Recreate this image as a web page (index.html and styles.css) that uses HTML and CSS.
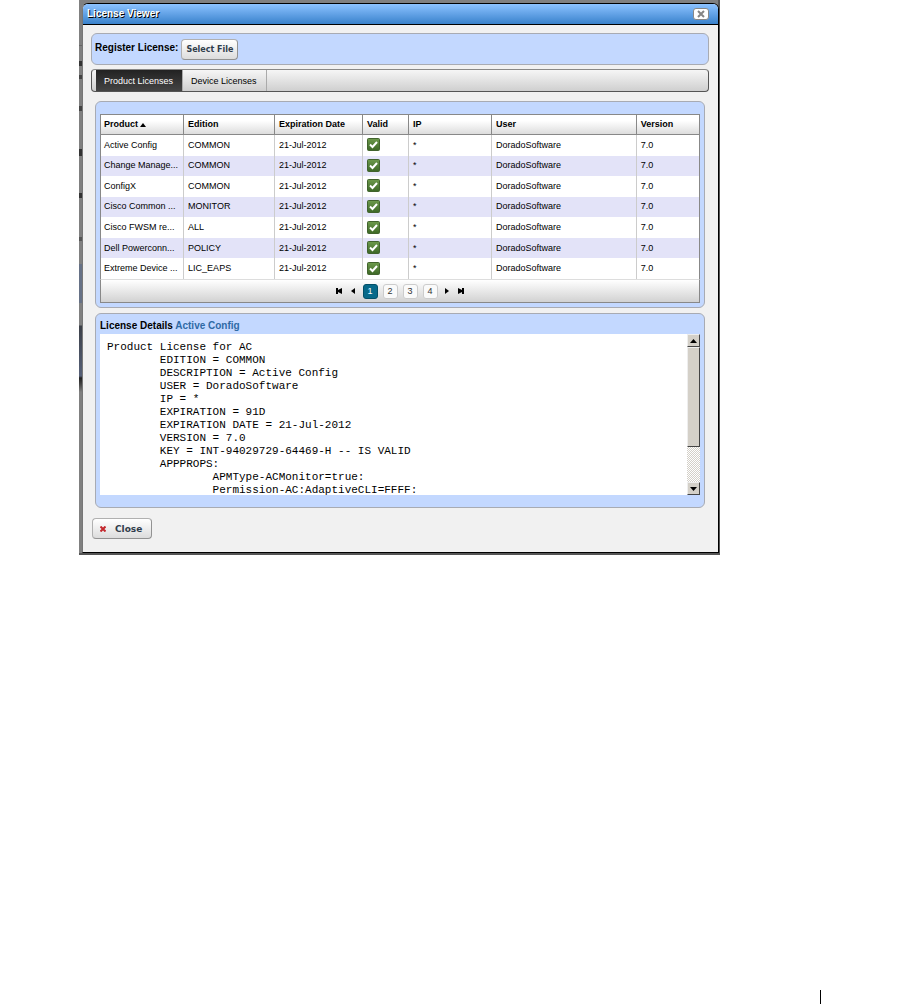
FILE: index.html
```html
<!DOCTYPE html>
<html lang="en">
<head>
    <meta charset="UTF-8">
    <meta name="viewport" content="width=device-width, initial-scale=1.0">
    <title>License Viewer</title>
    <link rel="stylesheet" href="styles.css">
</head>
<body>
    <svg class="sprite" aria-hidden="true">
        <defs>
            <linearGradient id="green" x1="0" y1="0" x2="0" y2="1">
                <stop offset="0" stop-color="#6d9a4c"/>
                <stop offset="1" stop-color="#3c6726"/>
            </linearGradient>
        </defs>
        <symbol id="check" viewBox="0 0 13 13">
            <rect x="0.5" y="0.5" width="12" height="12" rx="1" fill="url(#green)" stroke="#41632d"/>
            <path d="M3 6.5 L5.5 9 L10 4" fill="none" stroke="#fff" stroke-width="2"/>
        </symbol>
    </svg>

    <div class="overlay">
        <div class="dialog" role="dialog" aria-labelledby="title">
            <div class="titlebar">
                <h1 id="title">License Viewer</h1>
                <button class="close-x" aria-label="Close window">
                    <svg width="8" height="8" viewBox="0 0 8 8"><path d="M1 1 L7 7 M7 1 L1 7" stroke="#858585" stroke-width="2"/></svg>
                </button>
            </div>
            <div class="content">
                <div class="panel register">
                    <label for="file">Register License:</label>
                    <button class="btn" id="file">Select File</button>
                </div>

                <div class="tabs" role="tablist">
                    <button class="tab active" role="tab" aria-selected="true">Product Licenses</button>
                    <button class="tab" role="tab" aria-selected="false">Device Licenses</button>
                </div>

                <div class="tab-body">
                    <div class="panel list">
                        <table class="grid">
                            <thead>
                                <tr>
                                    <th class="c-product">Product<svg width="6" height="4" viewBox="0 0 6 4"><path d="M0 4 L3 0 L6 4Z"/></svg></th>
                                    <th class="c-edition">Edition</th>
                                    <th class="c-date">Expiration Date</th>
                                    <th class="c-valid">Valid</th>
                                    <th class="c-ip">IP</th>
                                    <th class="c-user">User</th>
                                    <th>Version</th>
                                </tr>
                            </thead>
                            <tbody>
                                <tr><td>Active Config</td><td>COMMON</td><td>21-Jul-2012</td><td><svg class="check" role="img" aria-label="Valid"><use href="#check"/></svg></td><td>*</td><td>DoradoSoftware</td><td>7.0</td></tr>
                                <tr><td>Change Manage...</td><td>COMMON</td><td>21-Jul-2012</td><td><svg class="check" role="img" aria-label="Valid"><use href="#check"/></svg></td><td>*</td><td>DoradoSoftware</td><td>7.0</td></tr>
                                <tr><td>ConfigX</td><td>COMMON</td><td>21-Jul-2012</td><td><svg class="check" role="img" aria-label="Valid"><use href="#check"/></svg></td><td>*</td><td>DoradoSoftware</td><td>7.0</td></tr>
                                <tr><td>Cisco Common ...</td><td>MONITOR</td><td>21-Jul-2012</td><td><svg class="check" role="img" aria-label="Valid"><use href="#check"/></svg></td><td>*</td><td>DoradoSoftware</td><td>7.0</td></tr>
                                <tr><td>Cisco FWSM re...</td><td>ALL</td><td>21-Jul-2012</td><td><svg class="check" role="img" aria-label="Valid"><use href="#check"/></svg></td><td>*</td><td>DoradoSoftware</td><td>7.0</td></tr>
                                <tr><td>Dell Powerconn...</td><td>POLICY</td><td>21-Jul-2012</td><td><svg class="check" role="img" aria-label="Valid"><use href="#check"/></svg></td><td>*</td><td>DoradoSoftware</td><td>7.0</td></tr>
                                <tr><td>Extreme Device ...</td><td>LIC_EAPS</td><td>21-Jul-2012</td><td><svg class="check" role="img" aria-label="Valid"><use href="#check"/></svg></td><td>*</td><td>DoradoSoftware</td><td>7.0</td></tr>
                            </tbody>
                        </table>
                        <div class="pager">
                            <button class="nav" aria-label="First page"><svg width="6" height="6" viewBox="0 0 6 6"><path d="M0 0 H2 V2 L6 0 V6 L2 4 V6 H0Z"/></svg></button>
                            <button class="nav" aria-label="Previous page"><svg width="4" height="6" viewBox="0 0 4 6"><path d="M4 0 V6 L0 3Z"/></svg></button>
                            <button class="page current">1</button>
                            <button class="page">2</button>
                            <button class="page">3</button>
                            <button class="page">4</button>
                            <button class="nav" aria-label="Next page"><svg width="4" height="6" viewBox="0 0 4 6"><path d="M0 0 L4 3 L0 6Z"/></svg></button>
                            <button class="nav" aria-label="Last page"><svg width="6" height="6" viewBox="0 0 6 6"><path d="M6 0 H4 V2 L0 0 V6 L4 4 V6 H6Z"/></svg></button>
                        </div>
                    </div>

                    <div class="panel details">
                        <h2>License Details <span>Active Config</span></h2>
                        <div class="viewer">
<pre>Product License for AC
        EDITION = COMMON
        DESCRIPTION = Active Config
        USER = DoradoSoftware
        IP = *
        EXPIRATION = 91D
        EXPIRATION DATE = 21-Jul-2012
        VERSION = 7.0
        KEY = INT-94029729-64469-H -- IS VALID
        APPPROPS:
                APMType-ACMonitor=true:
                Permission-AC:AdaptiveCLI=FFFF:</pre>
                            <div class="scrollbar">
                                <button class="arrow" aria-label="Scroll up"><svg width="7" height="4" viewBox="0 0 7 4"><path d="M0 4 L3.5 0 L7 4Z"/></svg></button>
                                <div class="track"><div class="thumb"></div></div>
                                <button class="arrow" aria-label="Scroll down"><svg width="7" height="4" viewBox="0 0 7 4"><path d="M0 0 H7 L3.5 4Z"/></svg></button>
                            </div>
                        </div>
                    </div>
                </div>

                <button class="btn close"><svg width="6" height="6" viewBox="0 0 6 6"><path d="M0.5 0.5 L5.5 5.5 M5.5 0.5 L0.5 5.5" stroke="#c3282d" stroke-width="2"/></svg>Close</button>
            </div>
        </div>
    </div>
    <div class="mark"></div>
</body>
</html>
```

FILE: styles.css
```css
* {
    box-sizing: border-box;
}

body {
    margin: 0;
    min-height: 100vh;
    display: flex;
    flex-direction: column;
    background: #fff;
    color: #000;
    font-family: "Liberation Sans", Arial, sans-serif;
    font-size: 9px;
}

button {
    margin: 0;
    padding: 0;
    border: none;
    background: none;
    color: inherit;
    font: inherit;
    cursor: pointer;
}

svg {
    display: block;
}

h1, h2 {
    margin: 0;
    font-size: 10px;
    line-height: 12px;
}

.sprite {
    position: absolute;
    width: 0;
    height: 0;
}

/* dimmed page behind the dialog */
.overlay {
    margin: 0 180px 0 79px;
    padding: 3px 1px 2px 3px;
    background:
        linear-gradient(#555, #555) right / 2px 100% no-repeat,
        linear-gradient(#555, #555) bottom / 100% 2px no-repeat,
        linear-gradient(#808080 45px, #666 45px, #666 46px, #808080 46px,
            #808080 61px, #333 61px, #333 66px, #808080 66px,
            #808080 75px, #444 75px, #444 79px, #808080 79px,
            #808080 106px, #444 106px, #444 111px, #808080 111px,
            #808080 149px, #333 149px, #333 156px, #808080 156px,
            #808080 193px, #333 193px, #333 198px, #808080 198px,
            #808080 237px, #555 237px, #555 241px, #808080 241px,
            #808080 264px, #667186 264px, #667186 303px, #808080 303px,
            #808080 325px, #3c4048 326px, #566078 376px, #222 378px,
            #444 384px, #808080 392px);
}

.dialog {
    border: 1px solid #000;
    border-left: 1px solid #777;
    border-radius: 6px 6px 0 0;
    background: #f1f1f1;
    overflow: hidden;
}

.titlebar {
    display: flex;
    align-items: center;
    justify-content: space-between;
    height: 21px;
    padding: 0 9px 0 4px;
    border-bottom: 1px solid #000;
    background: linear-gradient(#8cc2ff, #3982cc);
    color: #fff;
}

.titlebar h1 {
    text-shadow: 1px 1px 0 #000;
}

.close-x {
    display: flex;
    align-items: center;
    justify-content: center;
    width: 16px;
    height: 12px;
    border: 1px solid #888;
    border-radius: 3px;
    background: #fff;
}

.content {
    padding: 8px 9px 13px 8px;
}

.panel {
    border: 1px solid #a8abb3;
    border-radius: 6px;
    background: #c3d8ff;
}

.register {
    display: flex;
    align-items: center;
    gap: 3px;
    height: 32px;
    padding: 0 3px;
    font-size: 10px;
    font-weight: bold;
}

.register label {
    padding-bottom: 4px;
}

.btn {
    height: 21px;
    padding: 0 4px;
    border: 1px solid #b0b0b0;
    border-right-color: #929292;
    border-bottom-color: #929292;
    border-radius: 4px;
    background: linear-gradient(#fff, #dcdcdc);
    color: #303d4c;
    font-family: "DejaVu Sans", Verdana, sans-serif;
    font-size: 8px;
    font-weight: bold;
}

.tabs {
    display: flex;
    height: 23px;
    margin-top: 4px;
    padding-left: 4px;
    border: 1px solid #555;
    border-top-color: #888;
    border-radius: 4px;
    background: linear-gradient(#f6f6f6, #cfcfcf);
}

.tab {
    padding: 0 9px 0 8px;
    border-right: 1px solid #aaa;
}

.tab.active {
    background: linear-gradient(#222, #444);
    color: #fff;
}

.tab-body {
    display: flex;
    flex-direction: column;
    gap: 5px;
    margin: 9px 4px 10px;
}

.list {
    padding: 12px 4px 4px;
}

.grid {
    width: 100%;
    height: 165px;
    table-layout: fixed;
    border-collapse: separate;
    border-spacing: 0;
    border: 1px solid #888;
    border-bottom: none;
    background: #fff;
}

.grid th, .grid td {
    padding: 0 0 0 4px;
    border-right: 1px solid #ccc;
    text-align: left;
    white-space: nowrap;
    overflow: hidden;
}

.grid td {
    padding-bottom: 1px;
}

.grid th:first-child, .grid td:first-child {
    padding-left: 3px;
}

.grid th {
    height: 20px;
    padding-bottom: 1px;
    border-right-color: #888;
    border-bottom: 1px solid #888;
    background: linear-gradient(#fff 30%, #ddd);
}

.grid th:last-child, .grid td:last-child {
    border-right: none;
}

.grid th svg {
    display: inline-block;
    margin-left: 2px;
    vertical-align: middle;
}

.grid tbody tr:nth-child(even) {
    background: #e3e3f8;
}

.c-product { width: 13.9%; }
.c-edition { width: 15.2%; }
.c-date { width: 14.7%; }
.c-valid { width: 7.7%; }
.c-ip { width: 13.9%; }
.c-user { width: 24.2%; }

.check {
    width: 13px;
    height: 13px;
}

.pager {
    display: flex;
    align-items: center;
    justify-content: center;
    gap: 5px;
    height: 24px;
    border: 1px solid #888;
    border-top: 1px solid #ddd;
    background: linear-gradient(#fff, #d2d2d2);
}

.nav {
    display: flex;
    align-items: center;
    justify-content: center;
    width: 9px;
    height: 14px;
}

.page {
    width: 15px;
    height: 15px;
    border: 1px solid #ccc;
    border-radius: 3px;
    background: #fafafa;
    color: #333;
}

.page.current {
    border-color: #045068;
    background: #086a8a;
    color: #fff;
}

.details {
    padding: 6px 4px 12px;
}

.details h2 {
    padding-bottom: 2px;
}

.details h2 span {
    color: #2f6aa5;
}

.viewer {
    display: flex;
    height: 161px;
    background: #fff;
}

.viewer pre {
    flex: 1;
    margin: 0;
    padding: 7px 7px 0;
    overflow: hidden;
    font-family: "Liberation Mono", "Courier New", monospace;
    font-size: 11px;
    line-height: 13px;
}

.scrollbar {
    display: flex;
    flex-direction: column;
    width: 13px;
}

.arrow, .thumb {
    border: 1px solid #eee;
    border-right-color: #444;
    border-bottom-color: #444;
    background: #d4d0c8;
}

.arrow {
    display: flex;
    align-items: center;
    justify-content: center;
    height: 13px;
}

.track {
    flex: 1;
    background: repeating-conic-gradient(#d4d0c8 0 25%, #fff 0 50%) 0 0 / 2px 2px;
}

.thumb {
    height: 74%;
}

.close {
    display: flex;
    align-items: center;
    gap: 9px;
    margin-left: 1px;
    padding: 0 9px 0 7px;
    font-size: 9px;
}

/* rule at the foot of the page */
.mark {
    width: 1px;
    height: 14px;
    margin: auto 0 0 820px;
    background: #000;
}
```
